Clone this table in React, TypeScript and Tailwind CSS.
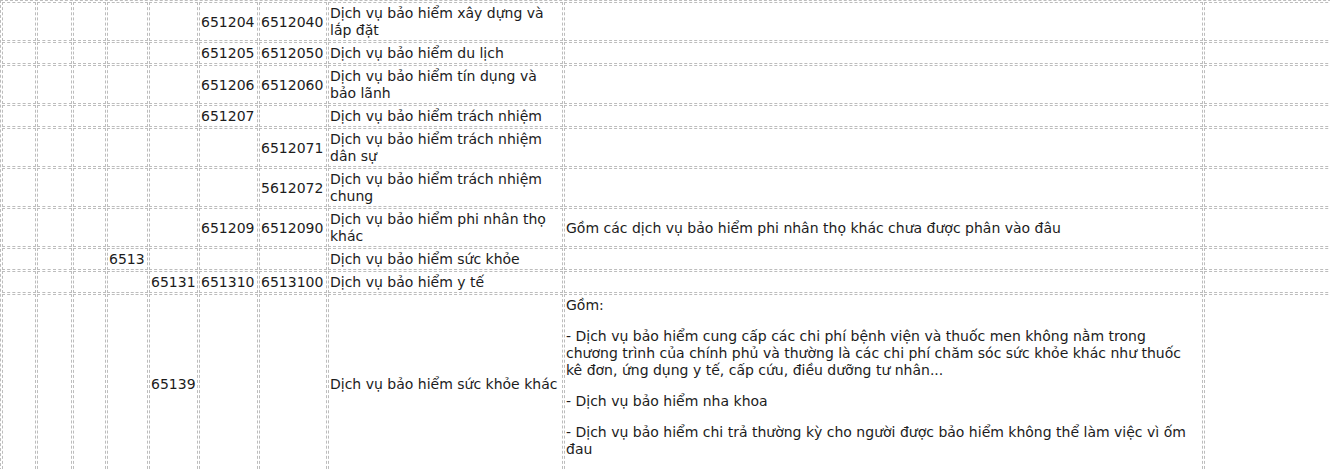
import React from 'react';

type Row = {
  cells: string[];
  desc?: string[];
};

const rows: Row[] = [
  { cells: ['', '', '', '', '', '651204', '6512040', 'Dịch vụ bảo hiểm xây dựng và lắp đặt', ''] },
  { cells: ['', '', '', '', '', '651205', '6512050', 'Dịch vụ bảo hiểm du lịch', ''] },
  { cells: ['', '', '', '', '', '651206', '6512060', 'Dịch vụ bảo hiểm tín dụng và bảo lãnh', ''] },
  { cells: ['', '', '', '', '', '651207', '', 'Dịch vụ bảo hiểm trách nhiệm', ''] },
  { cells: ['', '', '', '', '', '', '6512071', 'Dịch vụ bảo hiểm trách nhiệm dân sự', ''] },
  { cells: ['', '', '', '', '', '', '5612072', 'Dịch vụ bảo hiểm trách nhiệm chung', ''] },
  {
    cells: [
      '', '', '', '', '', '651209', '6512090', 'Dịch vụ bảo hiểm phi nhân thọ khác',
      'Gồm các dịch vụ bảo hiểm phi nhân thọ khác chưa được phân vào đâu',
    ],
  },
  { cells: ['', '', '', '6513', '', '', '', 'Dịch vụ bảo hiểm sức khỏe', ''] },
  { cells: ['', '', '', '', '65131', '651310', '6513100', 'Dịch vụ bảo hiểm y tế', ''] },
  {
    cells: ['', '', '', '', '65139', '', '', 'Dịch vụ bảo hiểm sức khỏe khác', ''],
    desc: [
      'Gồm:',
      '- Dịch vụ bảo hiểm cung cấp các chi phí bệnh viện và thuốc men không nằm trong chương trình của chính phủ và thường là các chi phí chăm sóc sức khỏe khác như thuốc kê đơn, ứng dụng y tế, cấp cứu, điều dưỡng tư nhân...',
      '- Dịch vụ bảo hiểm nha khoa',
      '- Dịch vụ bảo hiểm chi trả thường kỳ cho người được bảo hiểm không thể làm việc vì ốm đau',
    ],
  },
];

const colWidths = [34, 35, 33, 41, 49, 59, 68, 235, 639, 200];

const cellClass = 'border border-dashed border-[#bdbdbd] px-[1px] pt-[2px] pb-[1px] align-middle';

export default function App() {
  return (
    <div className="h-[469px] w-[1330px] overflow-hidden bg-white">
      <table
        className="table-fixed border-separate border-spacing-[1px] border border-dashed border-[#bdbdbd] w-[1406px] text-[14px] leading-[17px] text-[#1c1c1c]"
        style={{ fontFamily: '"DejaVu Sans", Verdana, sans-serif' }}
      >
        <colgroup>
          {colWidths.map((w, i) => (
            <col key={i} style={{ width: w }} />
          ))}
        </colgroup>
        <tbody>
          {rows.map((row, i) => (
            <tr key={i}>
              {row.cells.map((c, j) => (
                <td key={j} className={cellClass}>
                  {j === 8 && row.desc ? (
                    <div>
                      {row.desc.map((p, k) => (
                        <p key={k} className="mb-[14px]">
                          {p}
                        </p>
                      ))}
                    </div>
                  ) : (
                    c
                  )}
                </td>
              ))}
              <td className={cellClass}></td>
            </tr>
          ))}
        </tbody>
      </table>
    </div>
  );
}
